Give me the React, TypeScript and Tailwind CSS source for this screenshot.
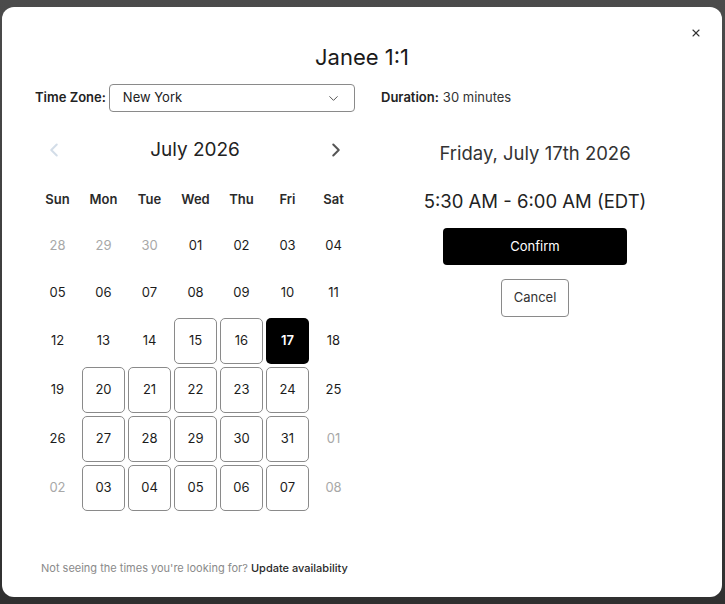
import { ChevronDown, ChevronLeft, ChevronRight, X } from "lucide-react";

type Day = { label: string; muted?: boolean; open?: boolean; selected?: boolean };

const weekdays = ["Sun", "Mon", "Tue", "Wed", "Thu", "Fri", "Sat"];

// weeks of the month, incl. spill-over days
const weeks: Day[][] = [
  [
    { label: "28", muted: true },
    { label: "29", muted: true },
    { label: "30", muted: true },
    { label: "01" },
    { label: "02" },
    { label: "03" },
    { label: "04" },
  ],
  ["05", "06", "07", "08", "09", "10", "11"].map((label) => ({ label })),
  [
    { label: "12" },
    { label: "13" },
    { label: "14" },
    { label: "15", open: true },
    { label: "16", open: true },
    { label: "17", selected: true },
    { label: "18" },
  ],
  [
    { label: "19" },
    ...["20", "21", "22", "23", "24"].map((label) => ({ label, open: true })),
    { label: "25" },
  ],
  [
    { label: "26" },
    ...["27", "28", "29", "30", "31"].map((label) => ({ label, open: true })),
    { label: "01", muted: true },
  ],
  [
    { label: "02", muted: true },
    ...["03", "04", "05", "06", "07"].map((label) => ({ label, open: true })),
    { label: "08", muted: true },
  ],
];

function DayCell({ day }: { day: Day }) {
  if (day.selected) {
    return (
      <div className="h-[46px] flex items-center justify-center rounded-[5px] bg-black text-white font-semibold">
        {day.label}
      </div>
    );
  }
  if (day.open) {
    return (
      <div className="h-[46px] flex items-center justify-center rounded-[5px] border border-[#8a8a8a] text-[#1c1c1c] cursor-pointer">
        {day.label}
      </div>
    );
  }
  return (
    <div
      className={`h-[44px] flex items-center justify-center ${
        day.muted ? "text-[#a8a8a8]" : "text-[#1c1c1c]"
      }`}
    >
      {day.label}
    </div>
  );
}

export default function App() {
  return (
    <div
      className="w-[725px] h-[604px] bg-gradient-to-b from-[#4b4b4b] to-[#303030] pt-[7px] pl-[2px]"
      style={{ fontFamily: "Inter, 'Noto Sans', sans-serif" }}
    >
      <div className="relative w-[720px] h-[590px] bg-white rounded-[12px] flex flex-col px-[33px]">
        <button className="absolute top-[20px] right-[20px] text-[#333]">
          <X size={12} strokeWidth={2.2} />
        </button>

        <h1 className="pt-[36px] text-center text-[22px] leading-[28px] text-[#1a1a1a]">Janee 1:1</h1>

        <div className="flex mt-[13px]">
          {/* Calendar side */}
          <div className="w-[320px]">
            <div className="h-[28px] flex items-center">
              <span className="text-[13px] font-semibold text-[#222] mr-[3px]">Time Zone:</span>
              <div className="flex-1 h-[28px] border border-[#8a8a8a] rounded-[4px] flex items-center justify-between pl-[13px] pr-[13px]">
                <span className="text-[13px] text-[#222]">New York</span>
                <ChevronDown size={15} strokeWidth={1.6} className="text-[#555]" />
              </div>
            </div>

            <div className="mt-[24px] h-[28px] flex items-center justify-between pl-[8px] pr-[8px]">
              <ChevronLeft size={22} strokeWidth={2.2} className="text-[#d3dde8]" />
              <span className="text-[19px] text-[#222]">July 2026</span>
              <ChevronRight size={22} strokeWidth={2.2} className="text-[#555]" />
            </div>

            <div className="mt-[26px] grid grid-cols-7 gap-x-[3px] pl-[1px]">
              {weekdays.map((d) => (
                <div key={d} className="h-[20px] flex items-center justify-center text-[13px] font-semibold text-[#2a2a2a]">
                  {d}
                </div>
              ))}
            </div>

            <div className="mt-[14px] flex flex-col gap-[3px] pl-[1px]">
              {weeks.map((week, i) => (
                <div key={i} className="grid grid-cols-7 gap-x-[3px] items-center text-[13px]">
                  {week.map((day, j) => (
                    <DayCell key={j} day={day} />
                  ))}
                </div>
              ))}
            </div>
          </div>

          {/* Booking summary */}
          <div className="flex-1 ml-[26px] flex flex-col items-center">
            <div className="self-start h-[28px] flex items-center text-[13px] text-[#333]">
              <span className="font-semibold text-[#222] mr-[4px]">Duration:</span>30 minutes
            </div>
            <div className="mt-[28px] text-[18.5px] leading-[26px] text-[#333]">Friday, July 17th 2026</div>
            <div className="mt-[22px] text-[18.5px] leading-[26px] text-[#222]">5:30 AM - 6:00 AM (EDT)</div>
            <button className="mt-[14px] w-[184px] h-[37px] bg-black text-white text-[13px] rounded-[4px]">
              Confirm
            </button>
            <button className="mt-[14px] w-[68px] h-[38px] border border-[#8a8a8a] text-[#333] text-[13px] rounded-[4px]">
              Cancel
            </button>
          </div>
        </div>

        <div className="flex-1" />
        <p className="pb-[21px] pl-[6px] text-[11px] leading-[16px] text-[#8a8a8a]">
          Not seeing the times you're looking for?{" "}
          <span className="text-[#2a2a2a] font-medium cursor-pointer">Update availability</span>
        </p>
      </div>
    </div>
  );
}
